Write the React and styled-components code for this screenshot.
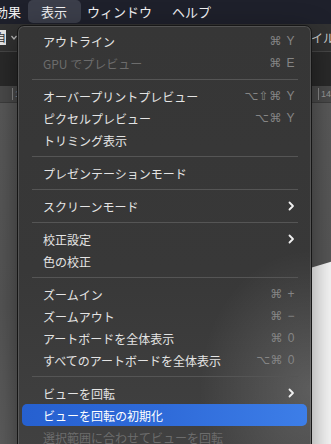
import styled, { createGlobalStyle, css } from "styled-components";

const GlobalStyle = createGlobalStyle`
    html, body {
        margin: 0;
        padding: 0;
        background: #575757;
    }
    body {
        font-family: "Noto Sans CJK JP", "Noto Sans", sans-serif;
        -webkit-font-smoothing: antialiased;
    }
`;

const jp = `"Noto Sans CJK JP", "Noto Sans", sans-serif`;
const keys = `"Liberation Sans", "DejaVu Sans", sans-serif`;

const Screen = styled.div`
    position: relative;
    width: 331px;
    height: 444px;
    overflow: hidden;
    display: flex;
    flex-direction: column;
    background: #575757;
`;

/* ---------- system menu bar ---------- */

const MenuBar = styled.div`
    height: 24px;
    flex: none;
    background: #1e202b;
    display: flex;
    align-items: stretch;
`;

const Titles = styled.div`
    display: flex;
    margin-left: -15px;
`;

const Title = styled.div`
    position: relative;
    padding: 0 10px;
    font-family: ${jp};
    font-size: 13px;
    line-height: 23px;
    color: #f2f2f4;

    ${({ $active }) => $active && css`
        &::before {
            content: "";
            position: absolute;
            top: 0;
            bottom: 1px;
            left: -3px;
            right: -4px;
            border-radius: 5px;
            background: #3b3e4a;
        }
    `}

    span {
        position: relative;
    }
`;

/* ---------- app chrome behind the menu ---------- */

const Toolbar = styled.div`
    height: 27px;
    flex: none;
    background: #323232;
    border-bottom: 1px solid #474747;
    display: flex;
    align-items: center;
    justify-content: space-between;
`;

const ToolLeft = styled.div`
    display: flex;
    align-items: center;
    gap: 5px;
`;

const Field = styled.div`
    width: 6px;
    height: 15px;
    background: #e8e8e8;
    overflow: hidden;
    font-size: 11px;
    line-height: 15px;
    color: #333;
    direction: rtl;
`;

const ToolRight = styled.div`
    font-family: ${jp};
    font-size: 12px;
    color: #cfcfcf;
    padding-right: 0;
    margin-right: -4px;
    white-space: nowrap;
`;

const TabBar = styled.div`
    height: 34px;
    flex: none;
    background: #2a2a2a;
`;

const Ruler = styled.div`
    height: 16px;
    flex: none;
    background: #4b4b4b;
    border-bottom: 1px solid #3e3e3e;
    display: flex;
    justify-content: space-between;
    align-items: center;
    font-family: ${keys};
    font-size: 9px;
    color: #9a9a9a;
`;

const Tick = styled.span`
    border-left: 1px solid #8a8a8a;
    padding-left: 2px;
    line-height: 12px;
    margin-left: ${({ $left }) => $left}px;
`;

const Canvas = styled.div`
    position: relative;
    flex: 1;
    background: linear-gradient(180deg, #5a5a5a 0%, #565656 60%, #5e5e5e 100%);
`;

const Artboard = styled.div`
    position: absolute;
    left: 250px;
    top: 156px;
    width: 90px;
    height: 200px;
    background: #fafafa;
    clip-path: polygon(0 27px, 100% 0, 100% 100%, 0 100%);
    filter: drop-shadow(0 -1px 0 #222);
`;

/* ---------- the dropdown ---------- */

const Menu = styled.div`
    position: absolute;
    top: 25px;
    left: 17px;
    width: 293px;
    height: 440px;
    padding-top: 4px;
    border: 1px solid #161616;
    border-radius: 7px;
    box-shadow: inset 0 0 0 1px rgba(255, 255, 255, 0.14), 0 10px 30px rgba(0, 0, 0, 0.45);
    background:
        radial-gradient(ellipse 160px 200px at 100% 82%, rgba(255, 255, 255, 0.16), rgba(255, 255, 255, 0) 70%),
        linear-gradient(180deg, #363636 0%, #383838 55%, #424242 100%);
`;

const Item = styled.div`
    height: 22px;
    margin: 0 4px;
    padding: 0 12px 0 21px;
    border-radius: 5px;
    display: flex;
    align-items: center;
    justify-content: space-between;
    font-family: ${jp};
    font-size: 12px;
    color: ${({ $disabled }) => ($disabled ? "#6c6c6c" : "#e4e4e4")};
    white-space: nowrap;

    ${({ $selected }) => $selected && css`
        background: linear-gradient(90deg, #2660d0 0%, #2f6bd9 50%, #3d7ee8 100%);
        color: #ffffff;
    `}
`;

const Keys = styled.span`
    font-family: ${keys};
    font-size: 12px;
    color: #858585;
    letter-spacing: 0.5px;
    word-spacing: 1px;
`;

const Separator = styled.div`
    height: 11px;
    margin: 0 13px 0 14px;
    display: flex;
    align-items: center;

    &::after {
        content: "";
        flex: 1;
        height: 1px;
        background: #555555;
    }
`;

const Chevron = () => (
    <svg width="7" height="10" viewBox="0 0 7 10">
        <polyline points="1.5,1.5 5,5 1.5,8.5" fill="none" stroke="#f0f0f0" strokeWidth="1.8" strokeLinecap="round" strokeLinejoin="round" />
    </svg>
);

const menu = [
    { label: "アウトライン", keys: "⌘ Y" },
    { label: "GPU でプレビュー", keys: "⌘ E", disabled: true },
    "-",
    { label: "オーバープリントプレビュー", keys: "⌥⇧⌘ Y" },
    { label: "ピクセルプレビュー", keys: "⌥⌘ Y" },
    { label: "トリミング表示" },
    "-",
    { label: "プレゼンテーションモード" },
    "-",
    { label: "スクリーンモード", sub: true },
    "-",
    { label: "校正設定", sub: true },
    { label: "色の校正" },
    "-",
    { label: "ズームイン", keys: "⌘ +" },
    { label: "ズームアウト", keys: "⌘ −" },
    { label: "アートボードを全体表示", keys: "⌘ 0" },
    { label: "すべてのアートボードを全体表示", keys: "⌥⌘ 0" },
    "-",
    { label: "ビューを回転", sub: true },
    { label: "ビューを回転の初期化", selected: true },
    { label: "選択範囲に合わせてビューを回転", disabled: true },
];

const App = () => {
    return (
        <>
            <GlobalStyle />
            <Screen>
                <MenuBar>
                    <Titles>
                        <Title><span>効果</span></Title>
                        <Title $active><span>表示</span></Title>
                        <Title><span>ウィンドウ</span></Title>
                        <Title><span>ヘルプ</span></Title>
                    </Titles>
                </MenuBar>
                <Toolbar>
                    <ToolLeft>
                        <Field>自</Field>
                        <svg width="6" height="6" viewBox="0 0 6 6">
                            <polyline points="0.5,1 3,4 5.5,1" fill="none" stroke="#bdbdbd" strokeWidth="1.2" />
                        </svg>
                    </ToolLeft>
                    <ToolRight>ァイル</ToolRight>
                </Toolbar>
                <TabBar />
                <Ruler>
                    <Tick $left={12}>1</Tick>
                    <Tick>14</Tick>
                </Ruler>
                <Canvas>
                    <Artboard />
                </Canvas>

                <Menu>
                    {menu.map((m, index) =>
                        m === "-" ? (
                            <Separator key={index} />
                        ) : (
                            <Item key={index} $disabled={m.disabled} $selected={m.selected}>
                                <span>{m.label}</span>
                                {m.keys && <Keys>{m.keys}</Keys>}
                                {m.sub && <Chevron />}
                            </Item>
                        )
                    )}
                </Menu>
            </Screen>
        </>
    );
};

export default App;
